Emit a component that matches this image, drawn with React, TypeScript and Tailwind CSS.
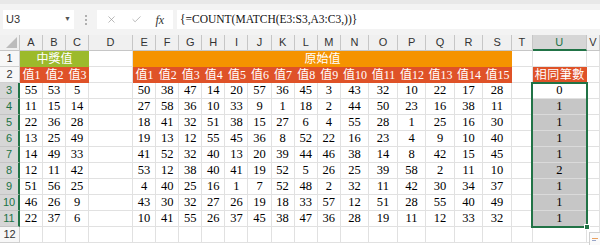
import { X, Check } from 'lucide-react';

const LETTERS = ['A','B','C','D','E','F','G','H','I','J','K','L','M','N','O','P','Q','R','S','T','U','V'];

const ROWS: [number[], number[], number][] = [
  [[55, 53, 5], [50, 38, 47, 14, 20, 57, 36, 45, 3, 43, 32, 10, 22, 17, 28], 0],
  [[11, 15, 14], [27, 58, 36, 10, 33, 9, 1, 18, 2, 44, 50, 23, 16, 38, 11], 1],
  [[22, 36, 28], [18, 41, 32, 51, 38, 15, 27, 6, 4, 55, 28, 1, 25, 16, 30], 1],
  [[13, 25, 49], [19, 13, 12, 55, 45, 36, 8, 52, 22, 16, 23, 4, 9, 10, 40], 1],
  [[14, 49, 33], [41, 52, 32, 40, 13, 20, 39, 44, 46, 38, 14, 8, 42, 15, 45], 1],
  [[12, 11, 42], [53, 12, 38, 40, 41, 19, 52, 5, 26, 25, 39, 58, 2, 11, 10], 2],
  [[51, 56, 25], [4, 40, 25, 16, 1, 7, 52, 48, 2, 32, 11, 42, 30, 34, 37], 1],
  [[46, 26, 9], [43, 30, 32, 27, 26, 19, 18, 33, 57, 12, 51, 28, 55, 40, 49], 1],
  [[22, 37, 6], [10, 41, 55, 26, 37, 45, 38, 47, 36, 28, 19, 11, 12, 33, 32], 1],
];

const serif = "font-['Liberation_Serif','Noto_Sans_CJK_TC',serif]";
const sans = "font-['Liberation_Sans',sans-serif]";
const cell = 'flex h-[16px] items-center justify-center border-b border-r border-[#e1e1e1]';
const red = 'flex h-[16px] items-center justify-center bg-[#df5228] text-white';

function RowHead({ n, active }: { n: number; active?: boolean }) {
  return active ? (
    <div className={`flex h-[16px] items-center justify-center border-b border-[#c4c4c4] border-r-2 border-r-[#217346] bg-[#d6d6d6] text-[11px] text-[#217346] ${sans}`}>
      {n}
    </div>
  ) : (
    <div className={`flex h-[16px] items-center justify-center border-b border-r border-[#d0d0d0] bg-[#f7f7f7] text-[11px] text-[#333] ${sans}`}>
      {n}
    </div>
  );
}

export default function App() {
  return (
    <div className="h-[245px] w-[600px] overflow-hidden bg-white">
      {/* formula bar */}
      <div className="flex h-[35px] items-start border-t-[4px] border-[#e8e8e8] bg-[#f3f3f3] pl-[3px] pt-[6px]">
        <div className={`flex h-[19px] w-[71px] items-center justify-between bg-white pl-[3px] pr-[3px] text-[11px] text-[#333] ${sans}`}>
          <span>U3</span>
          <span className="text-[7px] text-[#555]">▼</span>
        </div>
        <div className="flex h-[19px] w-[23px] flex-col items-center justify-center gap-[2px]">
          <span className="h-[2px] w-[2px] bg-[#b0b0b0]" />
          <span className="h-[2px] w-[2px] bg-[#b0b0b0]" />
          <span className="h-[2px] w-[2px] bg-[#b0b0b0]" />
        </div>
        <div className="flex h-[19px] w-[76px] items-center justify-around bg-white px-[2px]">
          <X className="h-[11px] w-[11px] text-[#9a9a9a]" strokeWidth={1.5} />
          <Check className="h-[11px] w-[11px] text-[#9a9a9a]" strokeWidth={1.5} />
          <span className={`text-[12px] italic text-[#333] ${serif}`}>fx</span>
        </div>
        <div className={`ml-[4px] flex h-[19px] flex-1 items-center bg-white pl-[3px] text-[11.5px] text-[#111] ${serif}`}>
          {'{=COUNT(MATCH(E3:S3,A3:C3,))}'}
        </div>
      </div>

      {/* sheet */}
      <div className="relative">
        <div className="grid grid-cols-[20px_23px_23px_23px_44px_repeat(9,23.1px)_repeat(6,28.5px)_21px_54px_1fr]">
          {/* column headers */}
          <div className="flex h-[16px] items-end justify-end border-b border-r border-[#c6c6c6] bg-[#f0f0f0] pb-[2px] pr-[2px]">
            <svg width="11" height="11" viewBox="0 0 11 11">
              <polygon points="11,0 11,11 0,11" fill="#bcbcbc" />
            </svg>
          </div>
          {LETTERS.map((l) =>
            l === 'U' ? (
              <div key={l} className={`flex h-[16px] items-center justify-center border-b-2 border-r border-b-[#217346] border-r-[#c6c6c6] bg-[#d6d6d6] text-[11px] text-[#217346] ${sans}`}>
                {l}
              </div>
            ) : (
              <div key={l} className={`flex h-[16px] items-center justify-center border-b border-r border-[#c6c6c6] bg-[#f0f0f0] text-[11px] text-[#333] ${sans}`}>
                {l}
              </div>
            )
          )}

          {/* row 1 */}
          <RowHead n={1} />
          <div className={`col-span-3 flex h-[16px] items-center justify-center bg-[#9cba2b] text-[12px] text-white ${serif}`}>中獎值</div>
          <div className={cell} />
          <div className={`col-span-15 flex h-[16px] items-center justify-center bg-[#f59300] text-[12px] text-white ${serif}`}>原始值</div>
          <div className={cell} />
          <div className={cell} />
          <div className={cell} />

          {/* row 2 */}
          <RowHead n={2} />
          {[1, 2, 3].map((i) => (
            <div key={`a${i}`} className={`${red} text-[12px] ${serif}`}>值{i}</div>
          ))}
          <div className={cell} />
          {Array.from({ length: 15 }, (_, i) => (
            <div key={`e${i}`} className={`${red} text-[12px] ${serif}`}>值{i + 1}</div>
          ))}
          <div className={cell} />
          <div className={`${red} text-[12px] tracking-[0.5px] ${serif}`}>相同筆數</div>
          <div className={cell} />

          {/* data rows */}
          {ROWS.map(([win, src, res], r) => (
            <div key={r} className="contents">
              <RowHead n={r + 3} active />
              {win.map((v, i) => (
                <div key={`w${i}`} className={`${cell} text-[12.5px] text-black ${serif}`}>{v}</div>
              ))}
              <div className={cell} />
              {src.map((v, i) => (
                <div key={`s${i}`} className={`${cell} text-[12.5px] text-black ${serif}`}>{v}</div>
              ))}
              <div className={cell} />
              {r === 0 ? (
                <div className={`${cell} text-[12.5px] text-black ${serif}`}>{res}</div>
              ) : (
                <div className={`flex h-[16px] items-center justify-center border-b border-r border-[#dadada] bg-[#c6c6c6] text-[12.5px] text-black ${serif}`}>{res}</div>
              )}
              <div className={cell} />
            </div>
          ))}

          {/* row 12 */}
          <RowHead n={12} />
          {LETTERS.map((l) => (
            <div key={`z${l}`} className={cell} />
          ))}
        </div>

        {/* selection U3:U11 */}
        <div className="pointer-events-none absolute left-[531px] top-[47px] h-[146px] w-[57px] border-2 border-[#217346]" />
        <div className="pointer-events-none absolute left-[584px] top-[189px] h-[6px] w-[6px] border border-white bg-[#217346]" />
        {/* quick analysis */}
        <div className="absolute left-[589px] top-[197px] flex h-[14px] w-[14px] flex-col items-start justify-center gap-[1px] border border-[#d0d0d0] bg-[#fafafa] pl-[2px]">
          <span className="h-[1px] w-[6px] bg-[#e8a060]" />
          <span className="h-[1px] w-[4px] bg-[#9aa7c8]" />
        </div>
      </div>
    </div>
  );
}
